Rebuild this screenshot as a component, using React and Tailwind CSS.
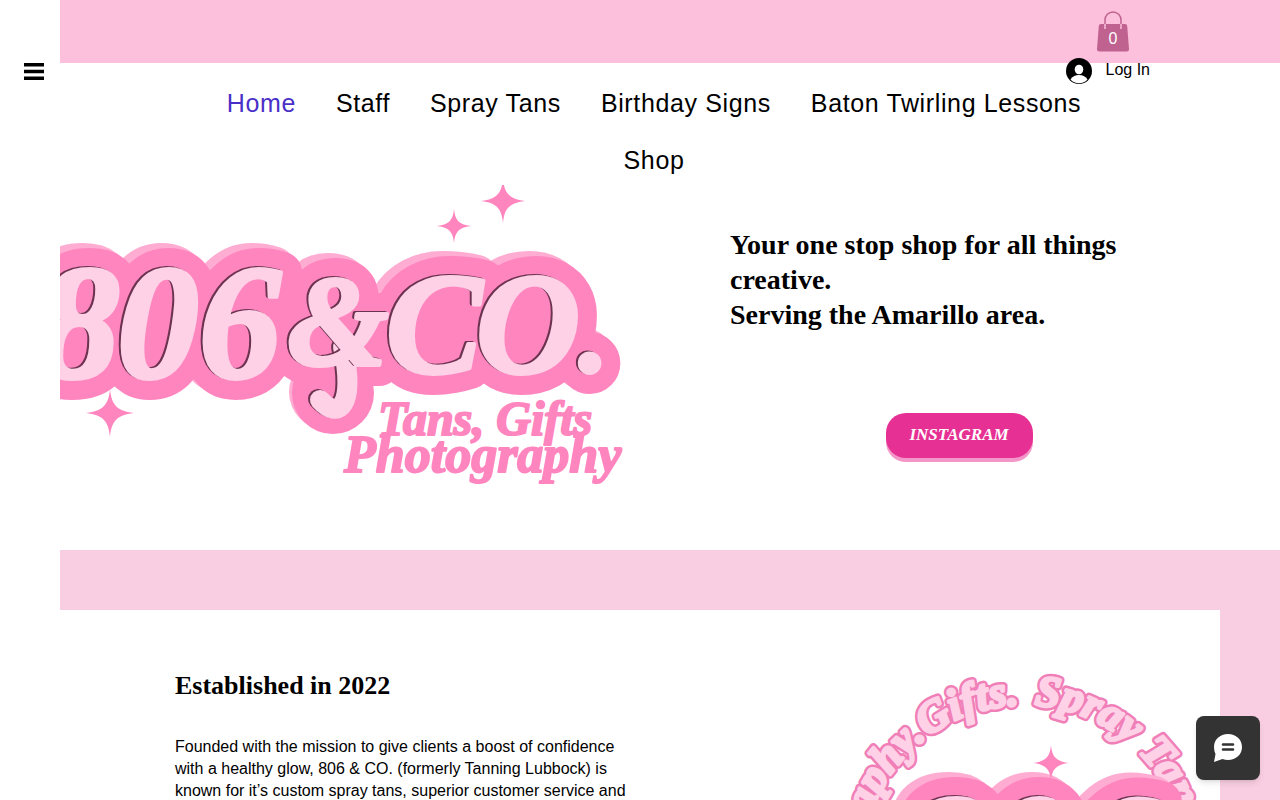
import clsx from 'clsx';

const navLinks = ['Home', 'Staff', 'Spray Tans', 'Birthday Signs', 'Baton Twirling Lessons', 'Shop'];

const heroLetters = [
  { char: '8', x: 19, y: 192, size: 164 },
  { char: '0', x: 98, y: 192, size: 164 },
  { char: '6', x: 180, y: 192, size: 164 },
  { char: '&', x: 278, y: 180, size: 130 },
  { char: 'C', x: 374, y: 188, size: 144 },
  { char: 'O', x: 468, y: 188, size: 144 },
  { char: '.', x: 534, y: 186, size: 120 },
];

const badgeLetters = [
  { char: '8', x: 107, y: 247, size: 172 },
  { char: '0', x: 190, y: 247, size: 172 },
  { char: '6', x: 280, y: 247, size: 172 },
];

function Sparkle({ x, y, r }) {
  return (
    <path
      transform={`translate(${x} ${y}) scale(${r})`}
      d="M0 -1 C.06 -.38 .25 -.09 1 0 C.25 .09 .06 .38 0 1 C-.06 .38 -.25 .09 -1 0 C-.25 -.09 -.06 -.38 0 -1Z"
      fill="#ff85bf"
    />
  );
}

// Fat outline, dark inner edge, then the pale face on top
function BubbleText({ id, letters, children }) {
  const href = `#${id}`;
  return (
    <g strokeLinejoin="round" strokeLinecap="round">
      <use href={href} x="-7" y="-5" fill="#ffacd2" stroke="#ffacd2" strokeWidth="42" />
      <use href={href} fill="#ff85bf" stroke="#ff85bf" strokeWidth="42" />
      {children}
      <use href={href} x="-2" y="-1" fill="#6b3350" stroke="#6b3350" strokeWidth="4" />
      <g fill="#ffd1e7" stroke="#ffd1e7" strokeWidth="4">
        <g id={id} className="font-['Liberation_Serif',serif] font-bold italic" textAnchor="middle">
          {letters.map(({ char, x, y, size }) => (
            <text key={char} x={x} y={y} fontSize={size}>{char}</text>
          ))}
        </g>
      </g>
    </g>
  );
}

function HeroLogo() {
  return (
    <svg viewBox="0 0 580 330" className="w-full max-w-[580px]" role="img" aria-label="806 & CO.">
      <circle cx="267" cy="207" r="38" fill="#ffacd2" />
      <BubbleText id="hero-letters" letters={heroLetters}>
        <circle cx="273" cy="208" r="41" fill="#ff85bf" />
        <ellipse cx="20" cy="138" rx="24" ry="44" fill="#ff85bf" />
        <ellipse cx="375" cy="138" rx="30" ry="40" fill="#ff85bf" />
        <ellipse cx="468" cy="138" rx="30" ry="40" fill="#ff85bf" />
        <circle cx="530" cy="174" r="27" fill="#ff85bf" />
        <path d="M281 162 C294 222 276 234 258 214" fill="none" stroke="#6b3350" strokeWidth="20" />
        <path d="M283 162 C296 222 278 235 260 215" fill="none" stroke="#ffd1e7" strokeWidth="20" />
      </BubbleText>
      <Sparkle x={443} y={16} r={22} />
      <Sparkle x={394} y={41} r={17} />
      <Sparkle x={50} y={228} r={24} />
      <g
        className="font-['Liberation_Serif',serif] font-bold italic"
        fill="#ff85bf"
        stroke="#ff85bf"
        strokeWidth="2"
        strokeLinejoin="round"
      >
        <text x="318" y="250" fontSize="48">Tans, Gifts</text>
        <text x="284" y="287" fontSize="52">Photography</text>
      </g>
    </svg>
  );
}

function RoundLogo() {
  return (
    <svg viewBox="0 0 370 370" className="w-[370px] overflow-visible" role="img" aria-label="806 photography, gifts, spray tans">
      <defs>
        <path id="arc-left" d="M186 364 A162 162 0 0 1 186 40" />
        <path id="arc-right" d="M186 40 A162 162 0 0 1 186 364" />
      </defs>
      <g strokeLinejoin="round">
        <use href="#ring-text" fill="#f07fb8" stroke="#f07fb8" strokeWidth="8" />
        <g fill="#ffd1e7" stroke="#ffd1e7" strokeWidth="3">
          <g id="ring-text" className="font-['Liberation_Serif',serif] font-bold italic" fontSize="44">
            <text textAnchor="end">
              <textPath href="#arc-left" startOffset="99%">Photography.Gifts.</textPath>
            </text>
            <text>
              <textPath href="#arc-right" startOffset="2%">Spray Tans</textPath>
            </text>
          </g>
        </g>
      </g>
      <BubbleText id="badge-letters" letters={badgeLetters} />
      <Sparkle x={213} y={98} r={18} />
    </svg>
  );
}

function MenuIcon() {
  return (
    <svg viewBox="0 0 20 17" className="h-[17px] w-5">
      <path d="M0 0h20v3.400H0zM0 6.800h20v3.400H0zM0 13.600h20V17H0z" />
    </svg>
  );
}

function CartIcon() {
  return (
    <svg viewBox="0 0 32 41" className="h-[41px] w-8">
      <path d="M4 13h24q2 0 2.200 2L32 38q0 2.500-2.500 2.500h-27Q0 40.500 0 38L1.800 15Q2 13 4 13Z" fill="#c0628f" />
      <path d="M8 13V9a8 8 0 0 1 16 0v4" fill="none" stroke="#c0628f" strokeWidth="1.500" />
      <path d="M8 13v5M24 13v5" stroke="#fcbfdc" strokeWidth="1.500" />
      <text x="16" y="33" textAnchor="middle" fontSize="16" fill="#fff" className="font-['Liberation_Sans',sans-serif]">0</text>
    </svg>
  );
}

function AvatarIcon() {
  return (
    <svg viewBox="0 0 26 26" className="size-[26px]">
      <circle cx="13" cy="13" r="13" />
      <ellipse cx="13" cy="11.500" rx="4.300" ry="4.800" fill="#fff" />
      <path d="M4.500 21.500Q7 17 13 17T21.500 21.500Q18 25.300 13 25.300T4.500 21.500Z" fill="#fff" />
    </svg>
  );
}

function Header() {
  return (
    <header>
      <div className="flex h-[63px] flex-col items-end bg-[#fcbfdc] pt-[11px] pr-[130px]">
        <button aria-label="Cart" className="mr-[21px]">
          <CartIcon />
        </button>
        <button className="mt-1.5 flex gap-3.5 text-base leading-6">
          <AvatarIcon />
          Log In
        </button>
      </div>
      <nav className="flex justify-center pt-[22px] pr-8 pb-[7px]">
        <div className="flex max-w-[900px] flex-wrap justify-center gap-x-10 gap-y-[21px] text-[25px] leading-9 tracking-wide">
          {navLinks.map((link, idx) => (
            <a key={link} href="#" className={clsx(idx === 0 && 'text-[#4a2fc8]')}>
              {link}
            </a>
          ))}
        </div>
      </nav>
    </header>
  );
}

function Hero() {
  return (
    <section className="grid min-h-[365px] grid-cols-2 items-start">
      <HeroLogo />
      <div className="flex flex-col pt-[42px] pr-[92px] pl-[60px]">
        <h1 className="font-['Liberation_Serif',serif] text-[28px] leading-[35px] font-bold">
          Your one stop shop for all things creative.
          <br />
          Serving the Amarillo area.
        </h1>
        <a
          href="#"
          className="mt-[81px] flex h-[45px] w-[147px] items-center justify-center self-center rounded-[20px] bg-[#e63093] pb-0.5 font-['Liberation_Serif',serif] text-[17px] font-bold text-white italic shadow-[0_4px_0_#f397c9]"
        >
          INSTAGRAM
        </a>
      </div>
    </section>
  );
}

function About() {
  return (
    <section className="bg-[#facee2] pt-[60px] pr-[60px]">
      <div className="grid grid-cols-2 bg-white pb-16">
        <div className="pt-[58px] pl-[115px]">
          <h2 className="font-['Liberation_Serif',serif] text-[26px] leading-9 font-bold">Established in 2022</h2>
          <p className="mt-8 text-base leading-[22px]">
            Founded with the mission to give clients a boost of confidence with a healthy glow, 806 &amp; CO. (formerly
            Tanning Lubbock) is known for it’s custom spray tans, superior customer service and
          </p>
        </div>
        <div className="flex items-start justify-end pt-[55px] pr-3">
          <RoundLogo />
        </div>
      </div>
    </section>
  );
}

export default function App() {
  return (
    <div className="flex min-h-screen bg-white font-['Liberation_Sans',sans-serif] text-black">
      <aside className="w-[60px] shrink-0 pt-[63px] pl-6">
        <button aria-label="Menu">
          <MenuIcon />
        </button>
      </aside>

      <main className="min-w-0 flex-1">
        <Header />
        <Hero />
        <About />
      </main>

      {/* Chat launcher */}
      <button
        aria-label="Chat"
        className="fixed right-5 bottom-5 flex size-16 items-center justify-center rounded-lg bg-[#333] shadow-md"
      >
        <svg viewBox="0 0 28 28" className="size-7">
          <path d="M14 0C22 0 28 5.500 28 13S22 26 14 26Q11 26 8.500 25L0 28L1.500 20Q0 17 0 13C0 5.500 6 0 14 0Z" fill="#fff" />
          <path d="M9 10.500h10M9 15.500h10" stroke="#333" strokeWidth="2.600" strokeLinecap="round" />
        </svg>
      </button>
    </div>
  );
}
